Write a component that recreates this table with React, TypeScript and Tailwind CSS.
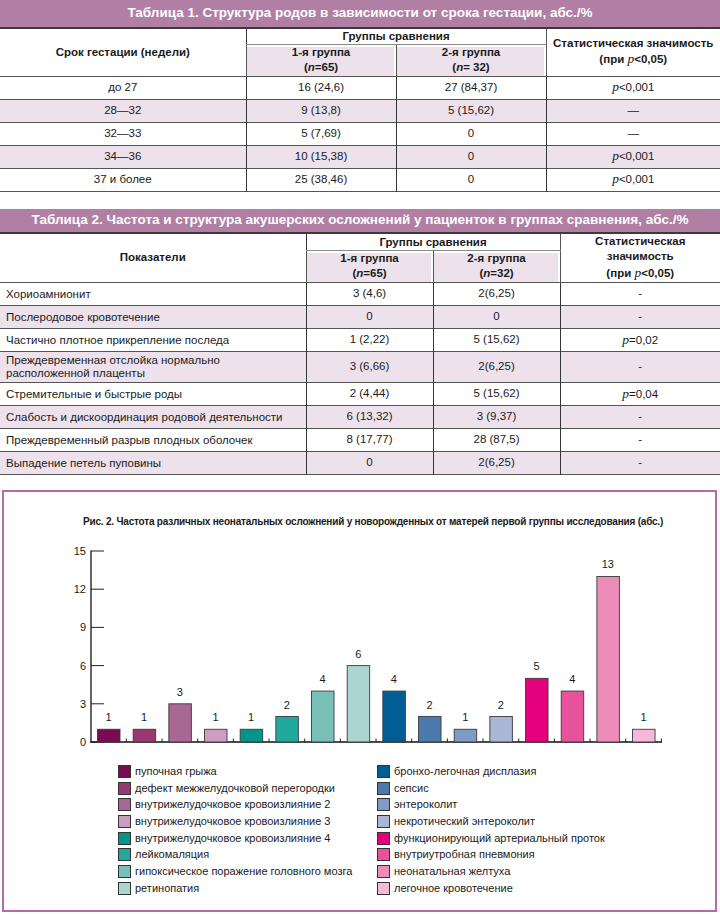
import React from "react";

const PINK = "bg-[#ede2ec]";

function P({ children }: { children?: React.ReactNode }) {
  return (
    <span>
      <i className="font-['Liberation_Serif',serif] text-[13.5px]">p</i>
      {children}
    </span>
  );
}

function Table1() {
  const rows: [string, string, string, React.ReactNode][] = [
    ["до 27", "16 (24,6)", "27 (84,37)", <P>&lt;0,001</P>],
    ["28—32", "9 (13,8)", "5 (15,62)", "—"],
    ["32—33", "5 (7,69)", "0", "—"],
    ["34—36", "10 (15,38)", "0", <P>&lt;0,001</P>],
    ["37 и более", "25 (38,46)", "0", <P>&lt;0,001</P>],
  ];
  return (
    <div>
      <div className="h-[29px] bg-[#b17ea4] border-b-2 border-[#3a3a3a] flex items-center justify-center text-white font-bold text-[13.5px]">
        Таблица 1. Структура родов в зависимости от срока гестации, абс./%
      </div>
      <table className="w-full table-fixed border-collapse text-[11.5px] text-[#1a1a1a]">
        <colgroup>
          <col className="w-[246px]" />
          <col className="w-[150px]" />
          <col className="w-[150px]" />
          <col />
        </colgroup>
        <thead>
          <tr className="h-[15px]">
            <th rowSpan={2} className="font-bold align-middle border-b border-[#555]">
              Срок гестации (недели)
            </th>
            <th colSpan={2} className="font-bold border-l border-[#333] border-b border-b-[#888] leading-[14px]">
              Группы сравнения
            </th>
            <th rowSpan={2} className="font-bold border-l border-[#333] border-b border-[#555] leading-[16px] pb-[2px]">
              Статистическая значимость
              <br />
              (при <i className="font-['Liberation_Serif',serif] font-normal text-[13.5px]">p</i>&lt;0,05)
            </th>
          </tr>
          <tr className="h-[32px]">
            <th className={`font-bold border-l border-[#333] border-b border-[#555] leading-[15px] ${PINK} shadow-[inset_-2px_2px_0_0_white]`}>
              1-я группа
              <br />(<i>n</i>=65)
            </th>
            <th className={`font-bold border-l border-[#333] border-b border-[#555] leading-[15px] ${PINK} shadow-[inset_-2px_2px_0_0_white]`}>
              2-я группа
              <br />(<i>n</i>= 32)
            </th>
          </tr>
        </thead>
        <tbody>
          {rows.map((r, i) => (
            <tr key={i} className={`h-[23px] ${i % 2 === 1 ? PINK : ""} border-b border-[#555]`}>
              <td className="text-center">{r[0]}</td>
              <td className="text-center border-l border-[#333]">{r[1]}</td>
              <td className="text-center border-l border-[#333]">{r[2]}</td>
              <td className="text-center border-l border-[#333]">{r[3]}</td>
            </tr>
          ))}
        </tbody>
      </table>
    </div>
  );
}

function Table2() {
  const rows: [string, string, string, React.ReactNode, boolean?][] = [
    ["Хориоамнионит", "3 (4,6)", "2(6,25)", "-"],
    ["Послеродовое кровотечение", "0", "0", "-"],
    ["Частично плотное прикрепление последа", "1 (2,22)", "5 (15,62)", <P>=0,02</P>],
    ["Преждевременная отслойка нормально\nрасположенной плаценты", "3 (6,66)", "2(6,25)", "-", true],
    ["Стремительные и быстрые роды", "2 (4,44)", "5 (15,62)", <P>=0,04</P>],
    ["Слабость и дискоординация родовой деятельности", "6 (13,32)", "3 (9,37)", "-"],
    ["Преждевременный разрыв плодных оболочек", "8 (17,77)", "28 (87,5)", "-"],
    ["Выпадение петель пуповины", "0", "2(6,25)", "-"],
  ];
  return (
    <div className="mt-[17px]">
      <div className="h-[25px] bg-[#b17ea4] border-b-2 border-[#3a3a3a] flex items-center justify-center text-white font-bold text-[13.5px]">
        Таблица 2. Частота и структура акушерских осложнений у пациенток в группах сравнения, абс./%
      </div>
      <table className="w-full table-fixed border-collapse text-[11.5px] text-[#1a1a1a]">
        <colgroup>
          <col className="w-[306px]" />
          <col className="w-[127px]" />
          <col className="w-[127px]" />
          <col />
        </colgroup>
        <thead>
          <tr className="h-[16px]">
            <th rowSpan={2} className="font-bold align-middle border-b border-[#555]">
              Показатели
            </th>
            <th colSpan={2} className="font-bold border-l border-[#333] border-b border-b-[#888] leading-[14px]">
              Группы сравнения
            </th>
            <th rowSpan={2} className="font-bold border-l border-[#333] border-b border-[#555] leading-[15.5px] pb-[1px]">
              Статистическая
              <br />
              значимость
              <br />
              (при <i className="font-['Liberation_Serif',serif] font-normal text-[13.5px]">p</i>&lt;0,05)
            </th>
          </tr>
          <tr className="h-[31px]">
            <th className={`font-bold border-l border-[#333] border-b border-[#555] leading-[15px] ${PINK} shadow-[inset_-2px_2px_0_0_white]`}>
              1-я группа
              <br />(<i>n</i>=65)
            </th>
            <th className={`font-bold border-l border-[#333] border-b border-[#555] leading-[15px] ${PINK} shadow-[inset_-2px_2px_0_0_white]`}>
              2-я группа
              <br />(<i>n</i>=32)
            </th>
          </tr>
        </thead>
        <tbody>
          {rows.map((r, i) => (
            <tr key={i} className={`${r[4] ? "h-[31px]" : "h-[23px]"} ${i % 2 === 1 ? PINK : ""} border-b border-[#555]`}>
              <td className="text-left pl-[6px] whitespace-pre-line leading-[13px]">{r[0]}</td>
              <td className="text-center border-l border-[#333]">{r[1]}</td>
              <td className="text-center border-l border-[#333]">{r[2]}</td>
              <td className="text-center border-l border-[#333]">{r[3]}</td>
            </tr>
          ))}
        </tbody>
      </table>
    </div>
  );
}

const BARS: { v: number; c: string; label: string }[] = [
  { v: 1, c: "#7b0a55", label: "пупочная грыжа" },
  { v: 1, c: "#99386f", label: "дефект межжелудочковой перегородки" },
  { v: 3, c: "#a86893", label: "внутрижелудочковое кровоизлияние 2" },
  { v: 1, c: "#cc9dc0", label: "внутрижелудочковое кровоизлияние 3" },
  { v: 1, c: "#00968a", label: "внутрижелудочковое кровоизлияние 4" },
  { v: 2, c: "#22a99d", label: "лейкомаляция" },
  { v: 4, c: "#79c1b8", label: "гипоксическое поражение головного мозга" },
  { v: 6, c: "#acd5cf", label: "ретинопатия" },
  { v: 4, c: "#005e95", label: "бронхо-легочная дисплазия" },
  { v: 2, c: "#4c7aad", label: "сепсис" },
  { v: 1, c: "#7f9bc5", label: "энтероколит" },
  { v: 2, c: "#a9b7d5", label: "некротический энтероколит" },
  { v: 5, c: "#e5007d", label: "функционирующий артериальный проток" },
  { v: 4, c: "#e6539a", label: "внутриутробная пневмония" },
  { v: 13, c: "#ee8cb9", label: "неонатальная желтуха" },
  { v: 1, c: "#f5b9d7", label: "легочное кровотечение" },
];

function Chart() {
  const base = 742;
  const unit = 191 / 15;
  const step = 35.67;
  return (
    <svg width={711} height={216} viewBox="4 540 711 216" className="block" fontFamily="'Liberation Sans', Arial, sans-serif">
      {[0, 3, 6, 9, 12, 15].map((t) => {
        const y = base - t * unit;
        return (
          <g key={t}>
            <line x1={91} x2={104} y1={y} y2={y} stroke="#222" strokeWidth={1} />
            <text x={86} y={y + 4} textAnchor="end" fontSize={11} fill="#1a1a1a">
              {t}
            </text>
          </g>
        );
      })}
      <line x1={91} x2={91} y1={550.5} y2={743} stroke="#111" strokeWidth={1.3} />
      <line x1={90.5} x2={662} y1={742} y2={742} stroke="#111" strokeWidth={1.5} />
      {BARS.map((b, i) => {
        const x = 97 + i * step;
        const h = b.v * unit;
        const tx = x + 23 + (step - 23) / 2;
        return (
          <g key={i}>
            <rect x={x + 0.5} y={base - h} width={22.5} height={h} fill={b.c} stroke="#3a3a3a" strokeWidth={0.9} />
            <text x={x + 11.5} y={base - h - 8} textAnchor="middle" fontSize={11} fill="#1a1a1a">
              {b.v}
            </text>
            <line x1={tx} x2={tx} y1={738.5} y2={742} stroke="#222" strokeWidth={1} />
          </g>
        );
      })}
    </svg>
  );
}

function Legend() {
  return (
    <div className="grid grid-flow-col grid-rows-8 grid-cols-[259px_1fr] ml-[114px] mt-[7px] text-[11px] text-[#1a1a1a]">
      {BARS.map((b, i) => (
        <div key={i} className="h-[16.7px] flex items-center gap-[4px]">
          <span className="w-[13px] h-[13px] border border-[#333] shrink-0" style={{ backgroundColor: b.c }} />
          <span className="leading-none">{b.label}</span>
        </div>
      ))}
    </div>
  );
}

export default function App() {
  return (
    <div className="w-[720px] h-[915px] bg-white overflow-hidden font-['Liberation_Sans',Arial,sans-serif]">
      <Table1 />
      <Table2 />
      <div className="mt-[15px] ml-[2px] w-[715px] h-[422px] border-2 border-[#b56ba7] box-border">
        <div className="pt-[24px] pl-[79px] text-[10px] font-bold leading-[12px] tracking-[-0.2px] text-[#1a1a1a] whitespace-nowrap">
          Рис. 2. Частота различных неонатальных осложнений у новорожденных от матерей первой группы исследования (абс.)
        </div>
        <div className="mt-[12px]">
          <Chart />
        </div>
        <Legend />
      </div>
    </div>
  );
}
